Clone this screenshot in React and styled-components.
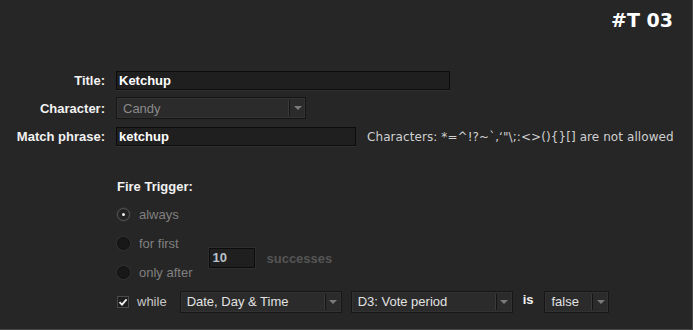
import React from "react";
import styled, { createGlobalStyle } from "styled-components";

const Global = createGlobalStyle`
  html, body { margin: 0; padding: 0; background: #262626; }
  * { box-sizing: border-box; }
`;

const Page = styled.div`
  width: 693px;
  height: 330px;
  background: #262626;
  border-right: 1px solid #474747;
  border-bottom: 1px solid #474747;
  font-family: "Liberation Sans", Arial, sans-serif;
  color: #eee;
  overflow: hidden;
`;

const Header = styled.div`
  display: flex;
  justify-content: flex-end;
  padding: 9px 19px 0 0;
  height: 71px;
`;

const Badge = styled.div`
  font-family: "DejaVu Sans", sans-serif;
  font-weight: bold;
  font-size: 19px;
  line-height: 22px;
  color: #fff;
`;

const Form = styled.div`
  display: grid;
  grid-template-columns: 105px auto;
  column-gap: 11px;
  row-gap: 7px;
  align-items: center;
`;

const Label = styled.div`
  text-align: right;
  font-weight: bold;
  font-size: 13px;
  color: #f2f2f2;
`;

const FieldRow = styled.div`
  display: flex;
  align-items: center;
  gap: 11px;
  margin-top: ${(p) => p.$mt || 0}px;
`;

const TextInput = styled.div`
  width: ${(p) => p.$w}px;
  height: ${(p) => p.$h || 19}px;
  background: #1f1f1f;
  border: 1px solid #0c0c0c;
  box-shadow: 0 1px 0 #303030;
  color: ${(p) => p.$color || "#fff"};
  font-weight: bold;
  font-size: 13px;
  line-height: 17px;
  padding-left: 2px;
`;

const Hint = styled.span`
  font-family: "DejaVu Sans", sans-serif;
  font-size: 12px;
  letter-spacing: 0.08px;
  color: #d0d0d0;
  white-space: nowrap;
`;

const SelectBox = styled.div`
  position: relative;
  width: ${(p) => p.$w}px;
  height: 22px;
  background: #2b2b2b;
  border: 1px solid #161616;
  box-shadow: inset 0 0 0 1px #323232;
  display: flex;
  align-items: center;
  font-size: 13px;
  color: ${(p) => (p.$disabled ? "#8a8a8a" : "#e2e2e2")};
`;

const SelectText = styled.div`
  flex: 1;
  padding-left: 6px;
  white-space: nowrap;
`;

const SelectArrow = styled.div`
  width: 16px;
  height: 16px;
  border-left: 1px solid #151515;
  box-shadow: -1px 0 0 #3a3a3a;
  display: flex;
  align-items: center;
  justify-content: center;
  &::after {
    content: "";
    border-left: 4px solid transparent;
    border-right: 4px solid transparent;
    border-top: 4px solid #7a7a7a;
  }
`;

const Trigger = styled.div`
  padding-left: 117px;
  margin-top: 33px;
`;

const SectionTitle = styled.div`
  font-weight: bold;
  font-size: 13px;
  color: #f2f2f2;
  height: 15px;
  line-height: 15px;
`;

const OptionGrid = styled.div`
  display: grid;
  grid-template-columns: auto auto auto;
  grid-template-rows: repeat(3, 29px);
  justify-content: start;
  align-items: center;
  margin-top: 6px;
`;

const Option = styled.div`
  display: flex;
  align-items: center;
  gap: 9px;
  font-size: 13px;
  color: #808080;
  grid-column: 1;
  grid-row: ${(p) => p.$row};
`;

const Radio = styled.span`
  width: 13px;
  height: 13px;
  border-radius: 50%;
  background: ${(p) => (p.$on ? "#232323" : "#181818")};
  border: 1px solid ${(p) => (p.$on ? "#555" : "#101010")};
  box-shadow: 0 0 0 1px ${(p) => (p.$on ? "#2f2f2f" : "#303030")};
  display: flex;
  align-items: center;
  justify-content: center;
  &::after {
    content: "";
    width: 3px;
    height: 3px;
    border-radius: 50%;
    background: ${(p) => (p.$on ? "#eee" : "transparent")};
  }
`;

const CountInput = styled.div`
  grid-column: 2;
  grid-row: 2 / 4;
  margin-left: 17px;
  width: 46px;
  height: 20px;
  background: #1f1f1f;
  border: 1px solid #0c0c0c;
  box-shadow: 0 0 0 1px #2e2e2e;
  color: #b9c2cc;
  font-weight: bold;
  font-size: 13px;
  line-height: 18px;
  padding-left: 2px;
`;

const Muted = styled.div`
  grid-column: 3;
  grid-row: 2 / 4;
  margin-left: 11px;
  font-weight: bold;
  font-size: 13px;
  color: #555;
`;

const WhileRow = styled.div`
  display: flex;
  align-items: center;
  height: 29px;
`;

const Check = styled.span`
  width: 12px;
  height: 12px;
  background: #1d1d1d;
  border: 1px solid #4a4a4a;
  display: flex;
  align-items: center;
  justify-content: center;
`;

const WhileLabel = styled.span`
  font-size: 13px;
  color: #c8c8c8;
  margin: 0 13px 0 8px;
`;

const IsLabel = styled.span`
  font-weight: bold;
  font-size: 13px;
  color: #f2f2f2;
  margin: 0 11px 0 10px;
  position: relative;
  top: -2px;
`;

const Spacer = styled.span`
  width: ${(p) => p.$w}px;
`;

const Select = ({ w, children, disabled }) => (
  <SelectBox $w={w} $disabled={disabled}>
    <SelectText>{children}</SelectText>
    <SelectArrow />
  </SelectBox>
);

export default function App() {
  return (
    <Page>
      <Global />
      <Header>
        <Badge>#T 03</Badge>
      </Header>
      <Form>
        <Label>Title:</Label>
        <FieldRow>
          <TextInput $w={334}>Ketchup</TextInput>
        </FieldRow>
        <Label>Character:</Label>
        <FieldRow>
          <Select w={190} disabled>
            Candy
          </Select>
        </FieldRow>
        <Label>Match phrase:</Label>
        <FieldRow $mt={1}>
          <TextInput $w={240}>ketchup</TextInput>
          <Hint>Characters: *=^!?~`,‘"\;:&lt;&gt;(){"{}"}[] are not allowed</Hint>
        </FieldRow>
      </Form>
      <Trigger>
        <SectionTitle>Fire Trigger:</SectionTitle>
        <OptionGrid>
          <Option $row={1}>
            <Radio $on />
            always
          </Option>
          <Option $row={2}>
            <Radio />
            for first
          </Option>
          <Option $row={3}>
            <Radio />
            only after
          </Option>
          <CountInput>10</CountInput>
          <Muted>successes</Muted>
        </OptionGrid>
        <WhileRow>
          <Check>
            <svg width="10" height="10" viewBox="0 0 10 10">
              <path d="M1.5 5.2 L4 7.6 L8.6 2.4" fill="none" stroke="#f0f0f0" strokeWidth="1.8" />
            </svg>
          </Check>
          <WhileLabel>while</WhileLabel>
          <Select w={162}>Date, Day &amp; Time</Select>
          <Spacer $w={9} />
          <Select w={162}>D3: Vote period</Select>
          <IsLabel>is</IsLabel>
          <Select w={65}>false</Select>
        </WhileRow>
      </Trigger>
    </Page>
  );
}
